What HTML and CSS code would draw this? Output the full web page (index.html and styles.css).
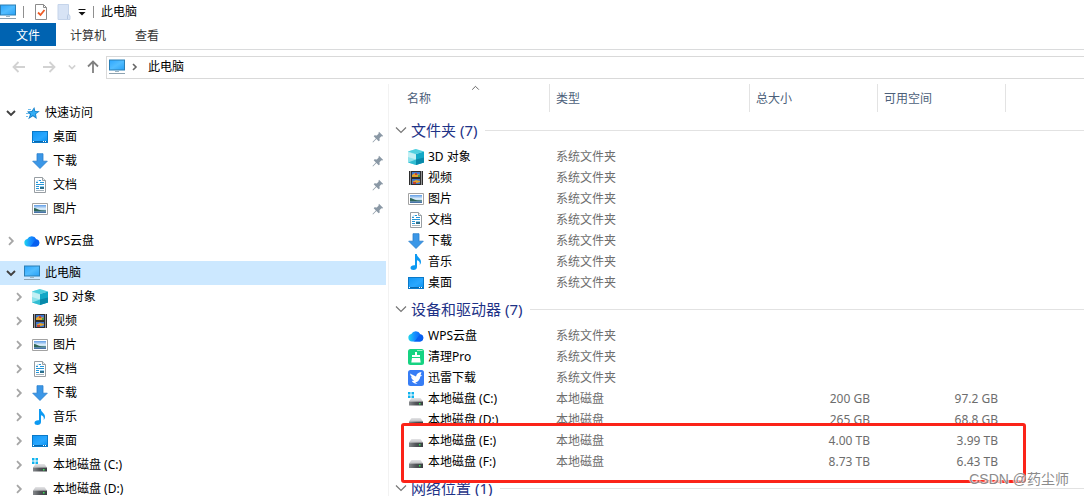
FILE: index.html
```html
<!DOCTYPE html>
<html lang="zh-CN">
<head>
<meta charset="utf-8">
<title>此电脑</title>
<link rel="stylesheet" href="styles.css">
</head>
<body>
<svg class="sprite" aria-hidden="true">
  <defs>
    <linearGradient id="g-screen" x1="0" y1="0" x2="1" y2="1"><stop offset="0" stop-color="#2fa8ff"/><stop offset=".5" stop-color="#52bdff"/><stop offset="1" stop-color="#2ba3f7"/></linearGradient>
    <linearGradient id="g-desk" x1="0" y1="0" x2="1" y2="1"><stop offset="0" stop-color="#1297f5"/><stop offset=".6" stop-color="#2aa8ff"/><stop offset="1" stop-color="#0d94f2"/></linearGradient>
    <linearGradient id="g-cloud" x1="0" y1="0" x2="1" y2="0"><stop offset="0" stop-color="#20d5ef"/><stop offset=".45" stop-color="#168bff"/><stop offset="1" stop-color="#0755f0"/></linearGradient>
    <linearGradient id="g-sky" x1="0" y1="0" x2="0" y2="1"><stop offset="0" stop-color="#5f9ce6"/><stop offset=".5" stop-color="#e8f5fc"/><stop offset=".65" stop-color="#a9cfe6"/><stop offset="1" stop-color="#345f9b"/></linearGradient>
    <linearGradient id="g-top" x1="0" y1="0" x2="0" y2="1"><stop offset="0" stop-color="#e4e4e6"/><stop offset="1" stop-color="#bfc0c3"/></linearGradient>
    <linearGradient id="g-front" x1="0" y1="0" x2="1" y2="0"><stop offset="0" stop-color="#85888b"/><stop offset=".5" stop-color="#505357"/><stop offset="1" stop-color="#3b3e42"/></linearGradient>
  </defs>
  <symbol id="pc" viewBox="0 0 16 16"><path d="M0 .5h16v11H0z" fill="#2b7fb5"/><path d="M1 1.500h14v9H1z" fill="url(#g-screen)"/><path d="M6 12h4v1H6z" fill="#9fb5c2"/><path d="M0 14h16v1H0z" fill="#8da2b0"/></symbol>
  <symbol id="star" viewBox="0 0 16 16"><path d="M10.300 2l1 4 4.500.2-3.800 2.700.8 5.100-3.900-2.800-4.700 3L6 9.400 3 6.500l4.700-.4z" fill="#147fc9"/><path d="M9.900 3.800l.8 2.900 3.200.1-2.700 2 .4 3.300-2.700-2-2.900 1.800 1.100-3-2.100-2 3.300-.2z" fill="#35aef5"/><path d="M4 4.500h3M2 8.500h3M2 11.500h2" stroke="#6dbcec" fill="none"/></symbol>
  <symbol id="desktop" viewBox="0 0 16 16"><path d="M0 2h16v12H0z" fill="#0a79c8"/><path d="M1 3h14v9H1z" fill="url(#g-desk)"/><path d="M1 12h14v1H1z" fill="#0868ae"/><path d="M1 12h1v1H1zM11 12h1v1h-1zM13 12h1v1h-1z" fill="#fff"/></symbol>
  <symbol id="download" viewBox="0 0 16 16"><path d="M5 .7h6v7.500h4.300L8 15.500.7 8.200H5z" fill="#3b97e7" stroke="#2a7fcd" stroke-width=".8"/></symbol>
  <symbol id="document" viewBox="0 0 16 16"><path d="M2.500.5h8l3 3v12h-11z" fill="#fff" stroke="#989ea3"/><path d="M10.500.5v3h3" fill="#e8edf0" stroke="#989ea3"/><path d="M4 5.500h2M7 3.500h2M5 4.500l1-1M8 5.500h4M4 7.500h8M4 9.500h3M4 11.500h3" stroke="#2596d8" fill="none"/><path d="M4 13.500h8" stroke="#a8b4bd"/><path d="M8 9h4v1H8z" fill="#8fcbed"/><path d="M8 10h4v2H8z" fill="#2b6f8c"/></symbol>
  <symbol id="picture" viewBox="0 0 16 16"><path d="M.5 2.500h15v11H.5z" fill="#fff" stroke="#a2a2a2"/><path d="M2 4h12v8H2z" fill="url(#g-sky)"/><path d="M2 7c2 0 4 2 7 2.200l5 .3v.8H2z" fill="#2f6658"/></symbol>
  <symbol id="cloud" viewBox="0 0 16 16"><path d="M4 13.500A3.800 3.800 0 0 1 3.300 6 5 5 0 0 1 12.300 6.200 3.700 3.700 0 0 1 12 13.500z" fill="url(#g-cloud)"/><path d="M5 13.500c3.500-.5 4.500-6 8-7.100A3.700 3.700 0 0 1 12 13.500z" fill="#075ff0"/></symbol>
  <symbol id="cube" viewBox="0 0 16 16"><path d="M0 2.500L8 0v16l-8-2.500z" fill="#8fe3ec"/><path d="M8 0l8 2.500-8 2.500-8-2.500z" fill="#4fd0df"/><path d="M0 3l8 2.500v5L0 8z" fill="#c3f0f4"/><path d="M0 13.500l8-3V16z" fill="#31bdd2"/><path d="M8 5l8-2.500v11L8 16z" fill="#12a8c6"/><path d="M8 10.500l8-2v5L8 16z" fill="#0889aa"/></symbol>
  <symbol id="video" viewBox="0 0 16 16"><path d="M1 1h14v14H1z" fill="#2e2e2e"/><path d="M2.500 1.500v14M13.500 1.500v14" stroke="#fff" stroke-dasharray="1 1"/><path d="M4 2h8v5H4zM4 9h8v5H4z" fill="#3e77cf"/><path d="M4 5l3-2 1 2 3-1 1 3H4zM4 12l4-2 4 1v1l-3 1z" fill="#e3a32a"/><path d="M7 3h2v2H7zM5 12h3v2H5z" fill="#c14334"/><path d="M10 5h2v2h-2z" fill="#4a9b4a"/></symbol>
  <symbol id="music" viewBox="0 0 16 16"><path d="M7 0h1.800c.3 3.500 4.500 4.200 4.200 8.200-.1 1-.6 2-1.300 2.800.6-2.800-.6-4.200-2.700-4.700V13c0 1.700-1.500 3-3.500 3S2.500 15 2.500 13.700C2.500 12 4.500 11 7 11.300z" fill="#0c99f2"/></symbol>
  <symbol id="drive" viewBox="0 0 16 16"><path d="M3.500 6h9L15 9.500H1z" fill="url(#g-top)"/><path d="M1 9.500h14V14H1z" fill="url(#g-front)"/><path d="M11 11h1.500v1.500H11z" fill="#39e85a"/></symbol>
  <symbol id="sysdrive" viewBox="0 0 16 16"><path d="M3.500 7h9L15 10.500H1z" fill="url(#g-top)"/><path d="M1 10.500h14v4H1z" fill="url(#g-front)"/><path d="M11 12h1.500v1.500H11z" fill="#39e85a"/><path d="M0 1h2.500v2.500H0zM3.500 1H6v2.500H3.500zM0 4.500h2.500V7H0zM3.500 4.500H6V7H3.500z" fill="#10b3ee"/></symbol>
  <symbol id="clean" viewBox="0 0 16 16"><rect width="16" height="16" rx="2.500" fill="#16d382"/><path d="M7 3h2v3h3v2H4V6h3zM4 9h8l.7 4.500H3.300z" fill="#fff"/><path d="M9 1.500h5.500" stroke="#9df0c8"/></symbol>
  <symbol id="bird" viewBox="0 0 16 16"><rect width="16" height="16" rx="2.500" fill="#377df5"/><path d="M2 3.500l6 3C8.500 4 10 2.500 13.500 2L12.600 5l1.600.8-1.900.7c-.2 3-2 5.200-5 6l2.200 1.200C6.500 14 4.500 12.700 3.800 10.800l2.400.1C4.500 9.800 3.300 8.500 3 7l1.800.6C3 6.500 2.300 5 2 3.500z" fill="#fff"/></symbol>
  <symbol id="pin" viewBox="0 0 12 12"><path d="M7 .8L11.200 5l-1.100.5-.7-.2-1.900 1.900.2 2.200-1 .9-2.300-2.200L1 11.500l-.5-.5 3.400-3.400L1.700 5.300l.9-1 2.200.2 1.900-1.900-.2-.7z" fill="#8a98a5"/></symbol>
  <symbol id="chev-right" viewBox="0 0 10 10"><path d="M3 1.200L6.800 5 3 8.800" fill="none" stroke="currentColor" stroke-width="1.800"/></symbol>
  <symbol id="crumb-right" viewBox="0 0 10 10"><path d="M3 2l3 3-3 3" fill="none" stroke="currentColor" stroke-width="1.600"/></symbol>
  <symbol id="chev-down" viewBox="0 0 10 10"><path d="M1 3L5 7l4-4" fill="none" stroke="currentColor" stroke-width="1.900"/></symbol>
  <symbol id="chev-thin" viewBox="0 0 12 12"><path d="M1 3.500L6 8.500l5-5" fill="none" stroke="currentColor" stroke-width="1.200"/></symbol>
  <symbol id="arrow" viewBox="0 0 14 14"><path d="M13 7H2M6.500 2L1.500 7l5 5" fill="none" stroke="currentColor" stroke-width="1.800"/></symbol>
  <symbol id="check-doc" viewBox="0 0 14 16"><path d="M1.500.5h8l3 3v12h-11z" fill="#fff" stroke="#8c8c8c"/><path d="M9.500.5v3h3" fill="none" stroke="#8c8c8c"/><path d="M4 8.500l2.500 2.500L10.500 6" fill="none" stroke="#ee5a24" stroke-width="1.800"/></symbol>
  <symbol id="new-folder" viewBox="0 0 14 16"><path d="M1 .5h10.500v9.500L13 12v3.500H1z" fill="#d7e3f5" stroke="#c5d4ea"/><path d="M10.500 15v-3l1-2" fill="none" stroke="#b6c8e2"/></symbol>
  <symbol id="menu-caret" viewBox="0 0 8 8"><path d="M.5 1.500h7" stroke="#111"/><path d="M.5 4h7L4 7.500z" fill="#111"/></symbol>
</svg>

<header class="titlebar">
  <svg class="icon"><use href="#pc"/></svg>
  <span class="divider"></span>
  <button class="quick" aria-label="属性"><svg class="icon-doc"><use href="#check-doc"/></svg></button>
  <button class="quick" aria-label="新建文件夹"><svg class="icon-doc"><use href="#new-folder"/></svg></button>
  <button class="quick quick-menu" aria-label="自定义"><svg class="icon-caret"><use href="#menu-caret"/></svg></button>
  <span class="divider"></span>
  <h1 class="window-title">此电脑</h1>
</header>
<nav class="ribbon">
  <button class="tab tab-file">文件</button>
  <button class="tab tab-computer">计算机</button>
  <button class="tab">查看</button>
</nav>
<div class="toolbar">
  <button class="nav-btn" aria-label="后退" disabled><svg class="icon-arrow"><use href="#arrow"/></svg></button>
  <button class="nav-btn" aria-label="前进" disabled><svg class="icon-arrow forward"><use href="#arrow"/></svg></button>
  <button class="nav-btn recent" aria-label="最近位置" disabled><svg class="icon-recent"><use href="#chev-down"/></svg></button>
  <button class="nav-btn up-btn" aria-label="向上"><svg class="icon-arrow up"><use href="#arrow"/></svg></button>
  <div class="address">
    <svg class="icon"><use href="#pc"/></svg>
    <svg class="crumb-chev"><use href="#crumb-right"/></svg>
    <button class="crumb">此电脑</button>
  </div>
</div>

<div class="body">
  <nav class="sidebar">
    <ul class="tree">
      <li><button class="node"><svg class="chev open"><use href="#chev-down"/></svg><svg class="icon"><use href="#star"/></svg><span>快速访问</span></button>
        <ul class="branch">
          <li><button class="node"><span class="chev"></span><svg class="icon"><use href="#desktop"/></svg><span>桌面</span><svg class="pin"><use href="#pin"/></svg></button></li>
          <li><button class="node"><span class="chev"></span><svg class="icon"><use href="#download"/></svg><span>下载</span><svg class="pin"><use href="#pin"/></svg></button></li>
          <li><button class="node"><span class="chev"></span><svg class="icon"><use href="#document"/></svg><span>文档</span><svg class="pin"><use href="#pin"/></svg></button></li>
          <li><button class="node"><span class="chev"></span><svg class="icon"><use href="#picture"/></svg><span>图片</span><svg class="pin"><use href="#pin"/></svg></button></li>
        </ul>
      </li>
      <li><button class="node"><svg class="chev"><use href="#chev-right"/></svg><svg class="icon"><use href="#cloud"/></svg><span>WPS云盘</span></button></li>
      <li><button class="node selected"><svg class="chev open"><use href="#chev-down"/></svg><svg class="icon"><use href="#pc"/></svg><span>此电脑</span></button>
        <ul class="branch">
          <li><button class="node"><svg class="chev"><use href="#chev-right"/></svg><svg class="icon"><use href="#cube"/></svg><span>3D 对象</span></button></li>
          <li><button class="node"><svg class="chev"><use href="#chev-right"/></svg><svg class="icon"><use href="#video"/></svg><span>视频</span></button></li>
          <li><button class="node"><svg class="chev"><use href="#chev-right"/></svg><svg class="icon"><use href="#picture"/></svg><span>图片</span></button></li>
          <li><button class="node"><svg class="chev"><use href="#chev-right"/></svg><svg class="icon"><use href="#document"/></svg><span>文档</span></button></li>
          <li><button class="node"><svg class="chev"><use href="#chev-right"/></svg><svg class="icon"><use href="#download"/></svg><span>下载</span></button></li>
          <li><button class="node"><svg class="chev"><use href="#chev-right"/></svg><svg class="icon"><use href="#music"/></svg><span>音乐</span></button></li>
          <li><button class="node"><svg class="chev"><use href="#chev-right"/></svg><svg class="icon"><use href="#desktop"/></svg><span>桌面</span></button></li>
          <li><button class="node"><svg class="chev"><use href="#chev-right"/></svg><svg class="icon"><use href="#sysdrive"/></svg><span>本地磁盘 (C:)</span></button></li>
          <li><button class="node"><svg class="chev"><use href="#chev-right"/></svg><svg class="icon"><use href="#drive"/></svg><span>本地磁盘 (D:)</span></button></li>
        </ul>
      </li>
    </ul>
  </nav>

  <main class="content">
    <table class="files">
      <colgroup><col class="col-name"><col class="col-type"><col class="col-size"><col class="col-size"><col></colgroup>
      <thead>
        <tr>
          <th><div class="head head-name">名称<svg class="sort"><use href="#chev-thin"/></svg></div></th>
          <th><div class="head">类型</div></th>
          <th><div class="head">总大小</div></th>
          <th><div class="head">可用空间</div></th>
          <th></th>
        </tr>
      </thead>
      <tbody>
        <tr><th colspan="5"><button class="group"><svg class="group-chev"><use href="#chev-thin"/></svg>文件夹 (7)</button></th></tr>
        <tr><td><div class="file"><svg class="icon"><use href="#cube"/></svg>3D 对象</div></td><td>系统文件夹</td><td></td><td></td><td></td></tr>
        <tr><td><div class="file"><svg class="icon"><use href="#video"/></svg>视频</div></td><td>系统文件夹</td><td></td><td></td><td></td></tr>
        <tr><td><div class="file"><svg class="icon"><use href="#picture"/></svg>图片</div></td><td>系统文件夹</td><td></td><td></td><td></td></tr>
        <tr><td><div class="file"><svg class="icon"><use href="#document"/></svg>文档</div></td><td>系统文件夹</td><td></td><td></td><td></td></tr>
        <tr><td><div class="file"><svg class="icon"><use href="#download"/></svg>下载</div></td><td>系统文件夹</td><td></td><td></td><td></td></tr>
        <tr><td><div class="file"><svg class="icon"><use href="#music"/></svg>音乐</div></td><td>系统文件夹</td><td></td><td></td><td></td></tr>
        <tr><td><div class="file"><svg class="icon"><use href="#desktop"/></svg>桌面</div></td><td>系统文件夹</td><td></td><td></td><td></td></tr>
      </tbody>
      <tbody>
        <tr><th colspan="5"><button class="group"><svg class="group-chev"><use href="#chev-thin"/></svg>设备和驱动器 (7)</button></th></tr>
        <tr><td><div class="file"><svg class="icon"><use href="#cloud"/></svg>WPS云盘</div></td><td>系统文件夹</td><td></td><td></td><td></td></tr>
        <tr><td><div class="file"><svg class="icon"><use href="#clean"/></svg>清理Pro</div></td><td>系统文件夹</td><td></td><td></td><td></td></tr>
        <tr><td><div class="file"><svg class="icon"><use href="#bird"/></svg>迅雷下载</div></td><td>系统文件夹</td><td></td><td></td><td></td></tr>
        <tr><td><div class="file"><svg class="icon"><use href="#sysdrive"/></svg>本地磁盘 (C:)</div></td><td>本地磁盘</td><td class="num">200 GB</td><td class="num">97.2 GB</td><td></td></tr>
        <tr><td><div class="file"><svg class="icon"><use href="#drive"/></svg>本地磁盘 (D:)</div></td><td>本地磁盘</td><td class="num">265 GB</td><td class="num">68.8 GB</td><td></td></tr>
        <tr><td><div class="file"><svg class="icon"><use href="#drive"/></svg>本地磁盘 (E:)</div></td><td>本地磁盘</td><td class="num">4.00 TB</td><td class="num">3.99 TB</td><td></td></tr>
        <tr><td><div class="file"><svg class="icon"><use href="#drive"/></svg>本地磁盘 (F:)</div></td><td>本地磁盘</td><td class="num">8.73 TB</td><td class="num">6.43 TB</td><td></td></tr>
      </tbody>
      <tbody>
        <tr><th colspan="5"><button class="group"><svg class="group-chev"><use href="#chev-thin"/></svg>网络位置 (1)</button></th></tr>
      </tbody>
    </table>
    <div class="highlight"></div>
  </main>
</div>
<div class="watermark">CSDN @药尘师</div>
</body>
</html>
```

FILE: styles.css
```css
* {
  box-sizing: border-box;
}

body {
  display: flex;
  flex-direction: column;
  position: relative;
  height: 100vh;
  margin: 0;
  overflow: hidden;
  background: #fff;
  color: #000;
  font: 12px/20px "Noto Sans", "Noto Sans CJK SC", sans-serif;
}

button {
  padding: 0;
  border: 0;
  background: none;
  color: inherit;
  font: inherit;
}

svg {
  display: block;
  flex: none;
}

.sprite {
  position: absolute;
  width: 0;
  height: 0;
}

.icon {
  width: 16px;
  height: 16px;
}

/* Title bar */
.titlebar {
  display: flex;
  flex: none;
  align-items: center;
  height: 23px;
}

.divider {
  width: 1px;
  height: 12px;
  margin: 0 7px;
  background: #8f8f8f;
}

.icon + .divider {
  margin-right: 10px;
}

.quick {
  margin-right: 9px;
}

.quick-menu {
  margin: 0 0 0 -2px;
}

.icon-doc {
  width: 14px;
  height: 16px;
}

.icon-caret {
  width: 8px;
  height: 8px;
}

.window-title {
  margin: 0;
  font-size: 12px;
  font-weight: 400;
}

/* Ribbon tabs */
.ribbon {
  display: flex;
  flex: none;
  height: 27px;
  padding-bottom: 3px;
  border-bottom: 1px solid #dadbdc;
}

.tab {
  padding: 2px 15px 0;
  color: #333;
}

.tab-file {
  padding: 2px 16px 0;
  background: #0063b1;
  color: #fff;
}

.tab-computer {
  padding: 2px 14px 0;
}

/* Navigation bar */
.toolbar {
  display: flex;
  flex: none;
  align-items: center;
  height: 34px;
  padding-left: 12px;
}

.nav-btn {
  margin-right: 16px;
  color: #808080;
}

.nav-btn:disabled {
  color: #d2d2d2;
}

.nav-btn.recent {
  margin: 0 10px 0 -4px;
}

.nav-btn.up-btn {
  margin-right: 6px;
}

.icon-arrow {
  width: 14px;
  height: 14px;
}

.forward {
  transform: rotate(180deg);
}

.up {
  transform: rotate(90deg);
}

.icon-recent {
  width: 8px;
  height: 8px;
}

.address {
  display: flex;
  flex: 1;
  align-items: center;
  height: 23px;
  padding: 0 0 1px 2px;
  border: 1px solid #d9d9d9;
  border-right: 0;
}

.crumb-chev {
  width: 10px;
  height: 10px;
  margin: 0 8px 0 5px;
  color: #666;
}

/* Panes */
.body {
  display: flex;
  flex: 1;
  min-height: 0;
}

.sidebar {
  flex: none;
  width: 389px;
  padding: 17px 2px 0 0;
  border-right: 1px solid #f2f2f2;
  overflow: hidden;
}

.tree,
.branch {
  margin: 0;
  padding: 0;
  list-style: none;
}

.tree > li {
  margin-bottom: 8px;
}

.node {
  display: flex;
  align-items: center;
  width: 100%;
  height: 24px;
  text-align: left;
}

.branch .node {
  padding-left: 8px;
}

.node .icon {
  margin-right: 5px;
}

.selected {
  background: #cce8ff;
}

.chev {
  width: 10px;
  height: 10px;
  margin: 0 8px 0 6px;
  color: #a6a6a6;
}

.chev.open {
  color: #404040;
}

.pin {
  width: 12px;
  height: 12px;
  margin: 0 2px 0 auto;
}

/* File list */
.content {
  position: relative;
  flex: 1;
  min-width: 0;
  overflow: hidden;
}

.files {
  width: 100%;
  border-collapse: collapse;
  table-layout: fixed;
}

.col-name {
  width: 161px;
}

.col-type {
  width: 200px;
}

.col-size {
  width: 128px;
}

.files th {
  padding: 0;
  font-weight: 400;
  text-align: left;
}

.files thead th {
  height: 30px;
  vertical-align: top;
}

.head {
  position: relative;
  height: 28px;
  padding: 5px 0 0 6px;
  border-right: 1px solid #e3e3e3;
  color: #4c607a;
}

.head-name {
  padding-left: 18px;
}

.sort {
  position: absolute;
  top: 0;
  left: 82px;
  width: 9px;
  height: 8px;
  color: #444;
  transform: rotate(180deg);
}

.group {
  display: flex;
  align-items: center;
  width: 100%;
  height: 32px;
  padding-left: 6px;
  color: #1e3287;
  font-size: 15px;
}

.group::after {
  flex: 1;
  height: 1px;
  margin-left: 8px;
  background: #e2e2e2;
  content: "";
}

.group-chev {
  width: 12px;
  height: 12px;
  margin-right: 4px;
  color: #777;
}

.files td {
  height: 21px;
  padding: 0 0 0 6px;
  color: #6d6d6d;
  white-space: nowrap;
}

.file {
  display: flex;
  align-items: center;
  gap: 4px;
  padding-left: 13px;
  color: #000;
}

.files .num {
  padding-right: 8px;
  text-align: right;
}

.highlight {
  position: absolute;
  top: 339px;
  left: 12px;
  width: 625px;
  height: 60px;
  border: 3px solid #fb2318;
  border-radius: 3px;
}

.watermark {
  position: absolute;
  right: 15px;
  bottom: 7px;
  color: #8c8c8c;
  font-family: "Liberation Sans", "Noto Sans CJK SC", sans-serif;
  font-size: 14px;
  text-shadow: 1px 1px 1px #fff, -1px -1px 1px #fff;
}
```
